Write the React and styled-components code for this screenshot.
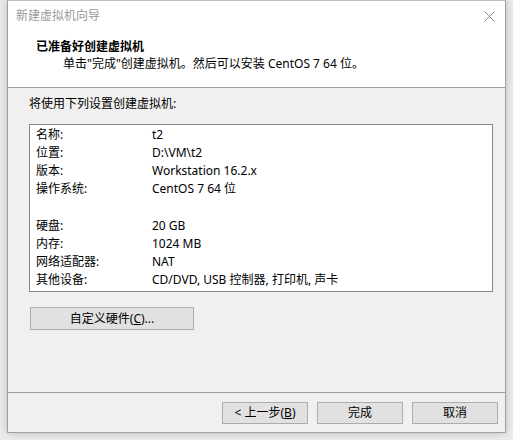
import React from "react";
import styled, { createGlobalStyle } from "styled-components";

const Global = createGlobalStyle`
  html, body { margin: 0; padding: 0; }
  body {
    background: #ececec;
    font-family: "Noto Sans", "Noto Sans CJK SC", sans-serif;
    font-size: 12px;
    color: #000;
  }
`;

const Page = styled.div`
  width: 513px;
  height: 440px;
  padding-left: 7px;
  box-sizing: border-box;
  overflow: hidden;
  display: flex;
  align-items: flex-start;
`;

const Window = styled.div`
  width: 499px;
  height: 433px;
  box-sizing: border-box;
  border: 1px solid #a0a0a0;
  border-top-color: #bdbdbd;
  background: #f0f0f0;
  display: flex;
  flex-direction: column;
  box-shadow: 0 0 8px rgba(0, 0, 0, 0.22);
`;

const Header = styled.div`
  background: #fff;
  height: 87px;
  box-sizing: border-box;
  border-bottom: 1px solid #a0a0a0;
  display: flex;
  flex-direction: column;
`;

const TitleBar = styled.div`
  height: 30px;
  display: flex;
  align-items: center;
  justify-content: space-between;
  padding: 0 10px 0 8px;
`;

const TitleText = styled.span`
  color: #9a9a9a;
  font-size: 12px;
  line-height: 16px;
`;

const Headline = styled.div`
  font-weight: bold;
  line-height: 17px;
  padding: 7px 0 0 28px;
`;

const Subline = styled.div`
  line-height: 17px;
  padding-left: 55px;
`;

const Body = styled.div`
  padding: 7px 12px 0 21px;
  display: flex;
  flex-direction: column;
  align-items: flex-start;
`;

const Intro = styled.div`
  line-height: 18px;
  padding-left: 0;
`;

const SummaryBox = styled.div`
  margin-top: 11px;
  width: 464px;
  height: 168px;
  box-sizing: border-box;
  border: 1px solid #828790;
  background: #fff;
  padding: 1px 0 0 6px;
`;

const Row = styled.div`
  display: grid;
  grid-template-columns: 116px 1fr;
  height: 18px;
  line-height: 18px;
  white-space: nowrap;
`;

const Spacer = styled.div`
  height: 19px;
`;

const Button = styled.button`
  height: 22px;
  width: ${(p) => p.$w || 86}px;
  box-sizing: border-box;
  border: 1px solid #adadad;
  background: #e1e1e1;
  font-family: inherit;
  font-size: 12px;
  color: #000;
  padding: 0;
  line-height: 18px;
  margin: 0;
`;

const CustomButton = styled(Button)`
  margin-top: 15px;
  margin-left: 1px;
  height: 23px;
`;

const Footer = styled.div`
  margin-top: auto;
  border-top: 1px solid #a0a0a0;
  padding: 9px 7px 8px 0;
  display: flex;
  justify-content: flex-end;
  gap: 9px;
`;

const U = styled.span`
  text-decoration: underline;
`;

const CloseIcon = () => (
  <svg width="11" height="11" viewBox="0 0 11 11">
    <path d="M0.5 0.5 L10.5 10.5 M10.5 0.5 L0.5 10.5" stroke="#8a8a8a" strokeWidth="1" fill="none" />
  </svg>
);

const rowsTop = [
  ["名称:", "t2"],
  ["位置:", "D:\\VM\\t2"],
  ["版本:", "Workstation 16.2.x"],
  ["操作系统:", "CentOS 7 64 位"],
];
const rowsBottom = [
  ["硬盘:", "20 GB"],
  ["内存:", "1024 MB"],
  ["网络适配器:", "NAT"],
  ["其他设备:", "CD/DVD, USB 控制器, 打印机, 声卡"],
];

export default function App() {
  return (
    <>
      <Global />
      <Page>
        <Window>
          <Header>
            <TitleBar>
              <TitleText>新建虚拟机向导</TitleText>
              <CloseIcon />
            </TitleBar>
            <Headline>已准备好创建虚拟机</Headline>
            <Subline>单击"完成"创建虚拟机。然后可以安装 CentOS 7 64 位。</Subline>
          </Header>
          <Body>
            <Intro>将使用下列设置创建虚拟机:</Intro>
            <SummaryBox>
              {rowsTop.map(([k, v]) => (
                <Row key={k}>
                  <span>{k}</span>
                  <span>{v}</span>
                </Row>
              ))}
              <Spacer />
              {rowsBottom.map(([k, v]) => (
                <Row key={k}>
                  <span>{k}</span>
                  <span>{v}</span>
                </Row>
              ))}
            </SummaryBox>
            <CustomButton $w={164}>
              自定义硬件(<U>C</U>)...
            </CustomButton>
          </Body>
          <Footer>
            <Button>
              &lt; 上一步(<U>B</U>)
            </Button>
            <Button>完成</Button>
            <Button>取消</Button>
          </Footer>
        </Window>
      </Page>
    </>
  );
}
